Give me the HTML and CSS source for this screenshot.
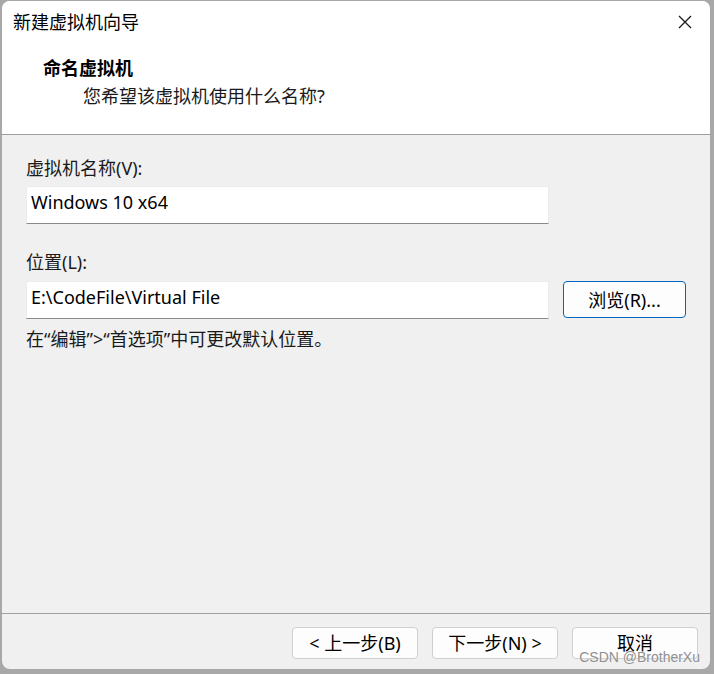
FILE: index.html
```html
<!DOCTYPE html>
<html lang="zh-CN">
<head>
<meta charset="utf-8">
<title>新建虚拟机向导</title>
<link rel="stylesheet" href="styles.css">
</head>
<body>
<div class="window">
  <div class="header">
    <div class="titlebar">
      <span class="title">新建虚拟机向导</span>
      <svg class="close" width="14" height="14" viewBox="0 0 14 14"><path d="M1 1 L13 13 M13 1 L1 13" stroke="#1a1a1a" stroke-width="1.3" fill="none"/></svg>
    </div>
    <div class="heading">命名虚拟机</div>
    <div class="subtitle">您希望该虚拟机使用什么名称?</div>
  </div>
  <div class="content">
    <div class="label">虚拟机名称(V):</div>
    <div class="field field-name">Windows 10 x64</div>
    <div class="label label-loc">位置(L):</div>
    <div class="row">
      <div class="field">E:\CodeFile\Virtual File</div>
      <div class="btn btn-browse">浏览(R)...</div>
    </div>
    <div class="hint">在“编辑”&gt;“首选项”中可更改默认位置。</div>
  </div>
  <div class="footer">
    <div class="btn">&lt; 上一步(B)</div>
    <div class="btn">下一步(N) &gt;</div>
    <div class="btn">取消</div>
  </div>
  <div class="watermark">CSDN @BrotherXu</div>
</div>
</body>
</html>
```

FILE: styles.css
```css
html, body {
  margin: 0;
  padding: 0;
}
body {
  background: #a8a8a8;
  width: 714px;
  height: 674px;
  overflow: hidden;
  font-family: "Noto Sans", "Noto Sans CJK SC", sans-serif;
  font-size: 18px;
  color: #000;
}
.window {
  position: relative;
  margin: 1px 0 0 2px;
  width: 708px;
  height: 668px;
  border-radius: 8px;
  overflow: hidden;
  background: #f0f0f0;
  display: flex;
  flex-direction: column;
}
.header {
  background: #fff;
  box-sizing: border-box;
  height: 134px;
  flex: none;
  border-bottom: 1px solid #a0a0a0;
  padding-top: 9px;
}
.titlebar {
  display: flex;
  justify-content: space-between;
  align-items: center;
  height: 24px;
  padding: 0 18px 0 11px;
}
.title {
  font-size: 18px;
  line-height: 24px;
}
.close {
  display: block;
}
.heading {
  margin-top: 22px;
  padding-left: 41px;
  font-weight: 700;
  line-height: 24px;
  font-size: 18px;
}
.subtitle {
  margin-top: 4px;
  padding-left: 81px;
  line-height: 24px;
  color: #1a1a1a;
}
.content {
  padding: 21px 0 0 24px;
}
.label {
  line-height: 24px;
  color: #1a1a1a;
}
.label-loc {
  margin-top: 26px;
}
.field {
  box-sizing: border-box;
  width: 523px;
  height: 38px;
  background: #fff;
  border: 1px solid #ebebeb;
  border-bottom-color: #8a8a8a;
  padding-left: 4px;
  line-height: 30px;
  font-size: 18px;
}
.field-name {
  margin-top: 6px;
}
.row {
  margin-top: 7px;
  display: flex;
  align-items: flex-start;
  gap: 14px;
}
.btn {
  box-sizing: border-box;
  width: 126px;
  height: 32px;
  background: #fdfdfd;
  border: 1px solid #d0d0d0;
  border-radius: 4px;
  display: flex;
  align-items: center;
  justify-content: center;
  font-size: 18px;
  line-height: 24px;
  color: #000;
}
.btn-browse {
  width: 123px;
  height: 37px;
  border: 1px solid #0067c0;
}
.hint {
  margin-top: 8px;
  line-height: 24px;
  color: #1a1a1a;
}
.footer {
  margin-top: auto;
  flex: none;
  border-top: 1px solid #a0a0a0;
  box-sizing: border-box;
  height: 56px;
  padding: 13px 12px 0 0;
  display: flex;
  justify-content: flex-end;
  align-items: flex-start;
  gap: 14px;
}
.watermark {
  position: absolute;
  right: 10px;
  bottom: 3px;
  font-family: "Liberation Sans", sans-serif;
  font-size: 14px;
  line-height: 17px;
  color: #8f8f8f;
  text-shadow: 0 0 1px #fff;
}
```
